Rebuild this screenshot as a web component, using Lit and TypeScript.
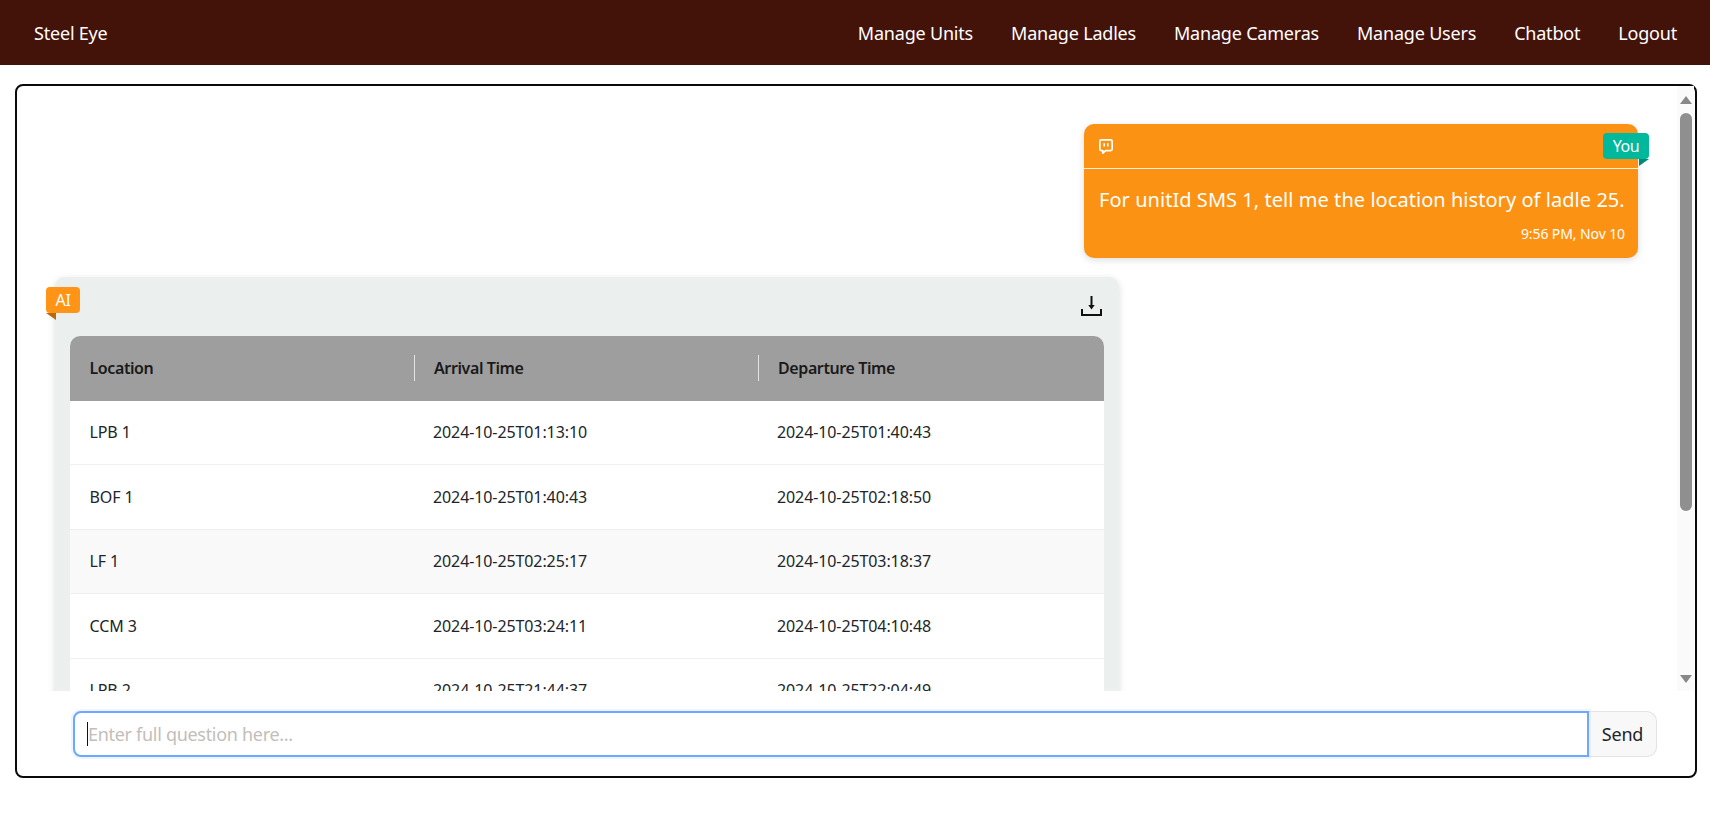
import { LitElement, html, css } from 'lit';
import { customElement } from 'lit/decorators.js';

const NAV_LINKS = ['Manage Units', 'Manage Ladles', 'Manage Cameras', 'Manage Users', 'Chatbot', 'Logout'];

const ROWS = [
  ['LPB 1', '2024-10-25T01:13:10', '2024-10-25T01:40:43'],
  ['BOF 1', '2024-10-25T01:40:43', '2024-10-25T02:18:50'],
  ['LF 1', '2024-10-25T02:25:17', '2024-10-25T03:18:37'],
  ['CCM 3', '2024-10-25T03:24:11', '2024-10-25T04:10:48'],
  ['LPB 2', '2024-10-25T21:44:37', '2024-10-25T22:04:49'],
];

@customElement('app-root')
export class AppRoot extends LitElement {
  static styles = css`
    :host {
      display: flex;
      flex-direction: column;
      height: 100vh;
      overflow: hidden;
      background: #fff;
      font-family: 'Noto Sans', 'Open Sans', sans-serif;
      color: #212529;
    }
    .navbar {
      flex: none;
      height: 65px;
      display: flex;
      align-items: center;
      justify-content: space-between;
      padding: 0 33px 0 34px;
      background: #43130a;
      color: #fff;
      font-size: 18px;
      letter-spacing: -0.2px;
    }
    .nav-links {
      display: flex;
      gap: 38px;
    }
    .panel {
      flex: none;
      box-sizing: border-box;
      height: 694px;
      margin: 19px 13px 0 15px;
      border: 2px solid #0a0a0a;
      border-radius: 8px;
      display: flex;
      flex-direction: column;
      padding-right: 1px;
    }
    .chat {
      flex: none;
      height: 605px;
      display: flex;
    }
    .messages {
      flex: 1;
      min-width: 0;
      box-sizing: border-box;
      overflow: hidden;
      padding: 38px 39px 0 38px;
      display: flex;
      flex-direction: column;
      gap: 19px;
    }
    .scrollbar {
      flex: none;
      box-sizing: border-box;
      width: 17px;
      padding: 10px 0 8px;
      background: #fafafa;
      display: flex;
      flex-direction: column;
      align-items: center;
    }
    .scrollbar svg {
      display: block;
      flex: none;
    }
    .thumb {
      flex: none;
      width: 12px;
      height: 398px;
      margin-top: 9px;
      border-radius: 6px;
      background: #8f8f8f;
    }
    .arrow-down {
      margin-top: auto;
    }
    .bubble {
      position: relative;
      flex: none;
      border-radius: 10px;
      box-shadow: 0 2px 7px rgba(0, 0, 0, 0.14);
    }
    .you {
      align-self: flex-end;
      box-sizing: border-box;
      width: 554px;
      height: 134px;
      background: #fb9213;
      color: #fff;
    }
    .you-head {
      box-sizing: border-box;
      height: 45px;
      padding: 15px 15px 0;
      border-bottom: 1px solid #fff3e0;
    }
    .you-head svg {
      display: block;
    }
    .you-text {
      padding: 17px 13px 0 15px;
      font-size: 20px;
      line-height: 27px;
      letter-spacing: 0.05px;
      white-space: nowrap;
    }
    .you-time {
      padding: 12px 13px 0;
      text-align: right;
      font-size: 14px;
      line-height: 18px;
      letter-spacing: -0.1px;
    }
    .badge {
      position: absolute;
      color: #fff;
      font-size: 16px;
      line-height: 26px;
      text-align: center;
      border-radius: 4px;
      letter-spacing: -0.4px;
    }
    .badge::after {
      content: '';
      position: absolute;
      top: 100%;
      width: 10px;
      height: 7px;
    }
    .badge-you {
      top: 9px;
      right: -11px;
      width: 46px;
      background: #00b89c;
    }
    .badge-you::after {
      right: 0;
      background: #008a75;
      clip-path: polygon(0 0, 100% 0, 0 100%);
    }
    .badge-ai {
      top: 10px;
      left: -9px;
      width: 34px;
      background: #ff9416;
    }
    .badge-ai::after {
      left: 0;
      background: #b86a0c;
      clip-path: polygon(0 0, 100% 0, 100% 100%);
    }
    .ai {
      align-self: flex-start;
      box-sizing: border-box;
      width: 1064px;
      background: #ebefee;
      padding: 0 15px 15px;
    }
    .ai-head {
      height: 59px;
      display: flex;
      justify-content: flex-end;
      align-items: flex-start;
      padding-top: 19px;
      box-sizing: border-box;
    }
    .ai-head svg {
      display: block;
      margin-right: 2px;
    }
    .table {
      border-radius: 10px;
      overflow: hidden;
      background: #fff;
      font-size: 16px;
      letter-spacing: -0.1px;
    }
    .row {
      display: grid;
      grid-template-columns: 343.5px 344px 1fr;
      height: 64.5px;
      align-items: center;
      border-bottom: 1px solid #eef0f0;
      box-sizing: border-box;
    }
    .row.shaded {
      background: #f9f9f9;
    }
    .row > div {
      padding-left: 19.5px;
    }
    .row.head {
      height: 64.5px;
      background: #9e9e9e;
      color: #1a1a1a;
      font-weight: 600;
      letter-spacing: -0.4px;
      border-bottom: none;
    }
    .row.head > div {
      height: 26px;
      line-height: 26px;
      border-left: 1px solid #e4e4e4;
    }
    .row.head > div:first-child {
      border-left: none;
    }
    .composer {
      flex: none;
      display: flex;
      margin: 20px 0 0 56px;
      width: 1584px;
      height: 46px;
    }
    .field {
      position: relative;
      flex: 1;
      display: flex;
    }
    .field input {
      flex: 1;
      min-width: 0;
      box-sizing: border-box;
      height: 46px;
      padding: 0 13px;
      border: 2px solid #6ea8fe;
      border-radius: 8px 0 0 8px;
      outline: none;
      box-shadow: 0 0 0 2px rgba(13, 110, 253, 0.07);
      font: inherit;
      font-size: 18px;
      letter-spacing: -0.3px;
      caret-color: transparent;
    }
    .field input::placeholder {
      color: #c2beba;
      opacity: 1;
    }
    .caret {
      position: absolute;
      left: 14px;
      top: 11px;
      width: 1px;
      height: 24px;
      background: #111;
    }
    .send {
      flex: none;
      width: 68px;
      height: 46px;
      box-sizing: border-box;
      border: 1px solid #e3e3e3;
      border-left: none;
      border-radius: 0 10px 10px 0;
      background: #f8f8f8;
      color: #212529;
      font: inherit;
      font-size: 18px;
      letter-spacing: -0.2px;
      padding: 0;
    }
  `;

  render() {
    return html`
      <nav class="navbar">
        <div>Steel Eye</div>
        <div class="nav-links">${NAV_LINKS.map((l) => html`<div>${l}</div>`)}</div>
      </nav>
      <section class="panel">
        <div class="chat">
          <div class="messages">
            <div class="bubble you">
              <div class="badge badge-you">You</div>
              <div class="you-head">
                <svg width="14" height="15" viewBox="0 0 14 15" fill="none" stroke="#fff" stroke-width="1.7" stroke-linejoin="round">
                  <path d="M2.3.85h9.4a1.45 1.45 0 0 1 1.45 1.45v7.8a1.45 1.45 0 0 1-1.45 1.45H6.6l-2.8 2.7v-2.7H2.3a1.45 1.45 0 0 1-1.45-1.45V2.3A1.45 1.45 0 0 1 2.3.85z" />
                  <path d="M5.2 4.3v3.3M8.8 4.3v3.3" />
                </svg>
              </div>
              <div class="you-text">For unitId SMS 1, tell me the location history of ladle 25.</div>
              <div class="you-time">9:56 PM, Nov 10</div>
            </div>
            <div class="bubble ai">
              <div class="badge badge-ai">AI</div>
              <div class="ai-head">
                <svg width="21" height="20" viewBox="0 0 21 20" fill="none" stroke="#111" stroke-width="2">
                  <path d="M1 13v6h19v-6" />
                  <path d="M10.5 0v11" />
                  <path d="M7.3 9l3.2 4.5L13.7 9z" fill="#111" stroke="none" />
                </svg>
              </div>
              <div class="table">
                <div class="row head">
                  <div>Location</div>
                  <div>Arrival Time</div>
                  <div>Departure Time</div>
                </div>
                ${ROWS.map(
                  (r, i) => html`<div class="row ${i === 2 ? 'shaded' : ''}">
                    ${r.map((c) => html`<div>${c}</div>`)}
                  </div>`
                )}
              </div>
            </div>
          </div>
          <div class="scrollbar">
            <svg width="12" height="8" viewBox="0 0 12 8"><path fill="#888" d="M6 0l6 8H0z" /></svg>
            <div class="thumb"></div>
            <svg class="arrow-down" width="12" height="8" viewBox="0 0 12 8"><path fill="#888" d="M0 0h12L6 8z" /></svg>
          </div>
        </div>
        <div class="composer">
          <div class="field">
            <input type="text" placeholder="Enter full question here..." />
            <span class="caret"></span>
          </div>
          <button class="send">Send</button>
        </div>
      </section>
    `;
  }
}
